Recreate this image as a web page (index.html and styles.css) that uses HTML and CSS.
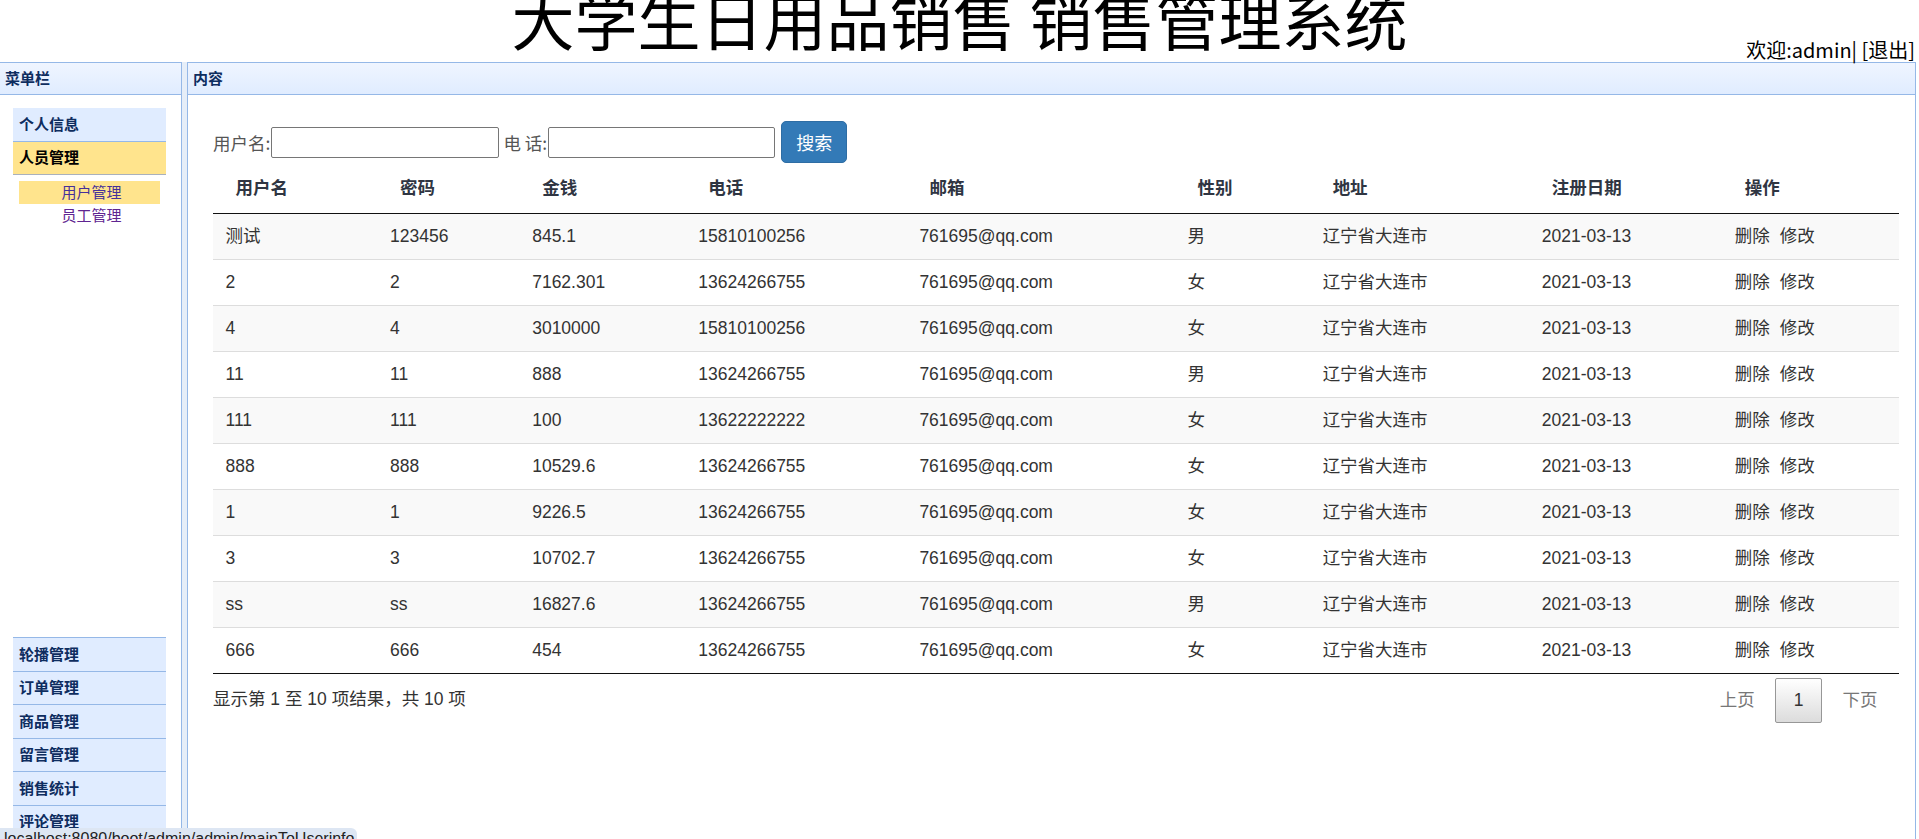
FILE: index.html
```html
<!DOCTYPE html>
<html lang="zh-CN">
<head>
<meta charset="utf-8">
<title>大学生日用品销售 销售管理系统</title>
<link rel="stylesheet" href="styles.css">
</head>
<body>
<div class="top">
  <h1 class="title">大学生日用品销售 销售管理系统</h1>
  <div class="welcome">欢迎:admin| [<a class="logout">退出</a>]</div>
</div>
<div class="main">
  <div class="west">
    <div class="panel-header">菜单栏</div>
    <div class="west-body">
      <div class="accordion">
        <div class="acc-header">个人信息</div>
        <div class="acc-header selected">人员管理</div>
        <div class="acc-body">
          <a class="sub active">用户管理</a>
          <a class="sub visited">员工管理</a>
        </div>
        <div class="acc-header">轮播管理</div>
        <div class="acc-header">订单管理</div>
        <div class="acc-header">商品管理</div>
        <div class="acc-header">留言管理</div>
        <div class="acc-header">销售统计</div>
        <div class="acc-header">评论管理</div>
      </div>
    </div>
  </div>
  <div class="split"></div>
  <div class="center">
    <div class="panel-header">内容</div>
    <div class="center-body">
      <form class="search">
        <span class="lbl">用户名:</span><input type="text" class="inp">
        <span class="lbl lbl2">电 话:</span><input type="text" class="inp inp2">
        <button type="button" class="btn">搜索</button>
      </form>
      <table class="grid">
        <colgroup>
          <col class="c1"><col class="c2"><col class="c3"><col class="c4"><col class="c5"><col class="c6"><col class="c7"><col class="c8"><col class="c9">
        </colgroup>
        <thead>
          <tr><th>用户名</th><th>密码</th><th>金钱</th><th>电话</th><th>邮箱</th><th>性别</th><th>地址</th><th>注册日期</th><th>操作</th></tr>
        </thead>
        <tbody>
          <tr><td>测试</td><td>123456</td><td>845.1</td><td>15810100256</td><td>761695@qq.com</td><td>男</td><td>辽宁省大连市</td><td>2021-03-13</td><td><a class="op">删除</a> <a class="op">修改</a></td></tr>
          <tr><td>2</td><td>2</td><td>7162.301</td><td>13624266755</td><td>761695@qq.com</td><td>女</td><td>辽宁省大连市</td><td>2021-03-13</td><td><a class="op">删除</a> <a class="op">修改</a></td></tr>
          <tr><td>4</td><td>4</td><td>3010000</td><td>15810100256</td><td>761695@qq.com</td><td>女</td><td>辽宁省大连市</td><td>2021-03-13</td><td><a class="op">删除</a> <a class="op">修改</a></td></tr>
          <tr><td>11</td><td>11</td><td>888</td><td>13624266755</td><td>761695@qq.com</td><td>男</td><td>辽宁省大连市</td><td>2021-03-13</td><td><a class="op">删除</a> <a class="op">修改</a></td></tr>
          <tr><td>111</td><td>111</td><td>100</td><td>13622222222</td><td>761695@qq.com</td><td>女</td><td>辽宁省大连市</td><td>2021-03-13</td><td><a class="op">删除</a> <a class="op">修改</a></td></tr>
          <tr><td>888</td><td>888</td><td>10529.6</td><td>13624266755</td><td>761695@qq.com</td><td>女</td><td>辽宁省大连市</td><td>2021-03-13</td><td><a class="op">删除</a> <a class="op">修改</a></td></tr>
          <tr><td>1</td><td>1</td><td>9226.5</td><td>13624266755</td><td>761695@qq.com</td><td>女</td><td>辽宁省大连市</td><td>2021-03-13</td><td><a class="op">删除</a> <a class="op">修改</a></td></tr>
          <tr><td>3</td><td>3</td><td>10702.7</td><td>13624266755</td><td>761695@qq.com</td><td>女</td><td>辽宁省大连市</td><td>2021-03-13</td><td><a class="op">删除</a> <a class="op">修改</a></td></tr>
          <tr><td>ss</td><td>ss</td><td>16827.6</td><td>13624266755</td><td>761695@qq.com</td><td>男</td><td>辽宁省大连市</td><td>2021-03-13</td><td><a class="op">删除</a> <a class="op">修改</a></td></tr>
          <tr><td>666</td><td>666</td><td>454</td><td>13624266755</td><td>761695@qq.com</td><td>女</td><td>辽宁省大连市</td><td>2021-03-13</td><td><a class="op">删除</a> <a class="op">修改</a></td></tr>
        </tbody>
      </table>
      <div class="foot">
        <div class="info">显示第 1 至 10 项结果，共 10 项</div>
        <div class="pages">
          <span class="pbtn">上页</span>
          <span class="pbtn current">1</span>
          <span class="pbtn">下页</span>
        </div>
      </div>
    </div>
  </div>
</div>
<div class="status">localhost:8080/boot/admin/admin/mainToUserinfo</div>
</body>
</html>
```
FILE: styles.css
```css
* { box-sizing: border-box; }
html, body { margin: 0; padding: 0; height: 100%; }
body {
  font-family: "Liberation Sans", Arial, "Noto Sans CJK SC", sans-serif;
  color: #333;
  background: #fff;
  overflow: hidden;
}

/* top banner */
.top {
  height: 62px;
  position: relative;
  display: flow-root;
}
.title {
  margin: -14px 0 0;
  font-family: "Noto Sans CJK SC", sans-serif;
  font-size: 63px;
  line-height: 63px;
  font-weight: 400;
  text-align: center;
  color: #000;
}
.welcome {
  position: absolute;
  right: 4px;
  bottom: 0;
  font-family: "Noto Sans CJK SC", sans-serif;
  font-size: 20px;
  line-height: 24px;
  color: #000;
}
.logout { color: #000; text-decoration: none; }

/* layout */
.main {
  display: flex;
  height: 777px;
  padding-right: 3px;
}
.west {
  width: 182px;
  border-right: 1px solid #95b8e7;
  display: flex;
  flex-direction: column;
  flex: none;
}
.split {
  width: 5px;
  flex: none;
  background: #e6eef8;
}
.center {
  flex: 1;
  min-width: 0;
  border-left: 1px solid #95b8e7;
  border-right: 1px solid #95b8e7;
  display: flex;
  flex-direction: column;
}
.panel-header {
  height: 33px;
  flex: none;
  border-top: 1px solid #95b8e7;
  border-bottom: 1px solid #95b8e7;
  background: linear-gradient(to bottom, #eff5ff 0%, #e0ecff 100%);
  padding: 0 5px;
  font-size: 15px;
  font-weight: bold;
  line-height: 31px;
  color: #0e2d5f;
}

/* accordion menu */
.west-body {
  flex: 1;
  min-height: 0;
  padding: 13px 15px 0 13px;
  display: flex;
  flex-direction: column;
}
.accordion {
  flex: 1;
  display: flex;
  flex-direction: column;
}
.acc-header {
  flex: none;
  background: #e0ecff;
  border-bottom: 1px solid #95b8e7;
  padding: 6.5px 6px 6px;
  font-size: 15px;
  font-weight: bold;
  line-height: 20px;
  color: #0e2d5f;
}
.acc-header.selected {
  background: #ffe48d;
  color: #000;
  border-bottom-color: #a9b1bd;
}
.acc-body {
  flex: 1;
  border-bottom: 1px solid #95b8e7;
  padding: 6px;
  display: flex;
  flex-direction: column;
}
.sub {
  display: block;
  height: 23px;
  line-height: 23px;
  text-align: center;
  font-size: 15px;
  color: #45309a;
  text-decoration: none;
  padding-left: 4px;
}
.sub.active { background: #ffe48d; }
.sub.visited { color: #5f2591; }

/* content */
.center-body {
  flex: 1;
  min-height: 0;
  padding: 26px 16px 0 25px;
}
.search {
  display: flex;
  align-items: center;
  height: 42px;
  margin: 0;
  font-size: 17.5px;
  color: #555;
}
.lbl {
  font-family: "Noto Sans CJK SC", sans-serif;
  line-height: 25px;
}
.lbl2 { margin-left: 4px; }
.inp {
  width: 228px;
  height: 31px;
  margin: 0 0 0 1px;
  padding: 1px 2px;
  border: 1px solid #767676;
  border-radius: 2px;
  background: #fff;
  font-size: 15px;
}
.inp2 { width: 227px; }
.btn {
  margin-left: 6px;
  width: 66px;
  height: 42px;
  padding: 0;
  background: #337ab7;
  border: 1px solid #2e6da4;
  border-radius: 5px;
  color: #fff;
  font-family: "Noto Sans CJK SC", sans-serif;
  font-size: 18px;
  line-height: 25px;
}

.grid {
  width: 100%;
  table-layout: fixed;
  border-collapse: separate;
  border-spacing: 0;
  font-size: 17.5px;
  border-bottom: 1px solid #111;
}
.c1 { width: 164.5px; }
.c2 { width: 142px; }
.c3 { width: 166px; }
.c4 { width: 221px; }
.c5 { width: 268px; }
.c6 { width: 135px; }
.c7 { width: 219px; }
.c8 { width: 193px; }
.c9 { width: 176.5px; }
.grid th {
  text-align: left;
  font-weight: bold;
  padding: 12.5px 22.5px;
  line-height: 25px;
  border-bottom: 1px solid #111;
  color: #2f3542;
  white-space: nowrap;
}
.grid td {
  padding: 10px 12.5px;
  line-height: 25px;
  border-top: 1px solid #ddd;
  color: #333;
  white-space: nowrap;
}
.grid tbody tr:first-child td { border-top: none; }
.grid tbody tr:nth-child(odd) { background: #f9f9f9; }
.op { color: #333; text-decoration: none; }
.op + .op { margin-left: 5px; }

.foot {
  display: flex;
  justify-content: space-between;
  font-size: 17.5px;
}
.info {
  padding-top: 13px;
  line-height: 25px;
  color: #333;
}
.pages {
  padding-top: 4px;
  display: flex;
  margin-right: 3px;
}
.pbtn {
  padding: 8.75px 17.5px;
  line-height: 25px;
  margin-left: 2px;
  color: #777;
  border: 1px solid transparent;
  border-radius: 2px;
}
.pbtn.current {
  color: #333;
  border-color: #979797;
  background: linear-gradient(to bottom, #ffffff 0%, #dcdcdc 100%);
}

/* browser status bubble */
.status {
  position: fixed;
  left: 0;
  bottom: 0;
  width: 357px;
  height: 11px;
  overflow: hidden;
  background: #dde6f3;
  border-top-right-radius: 6px;
  padding: 2px 0 0 4px;
  font-size: 16px;
  line-height: 18px;
  color: #222;
  white-space: nowrap;
}
```
